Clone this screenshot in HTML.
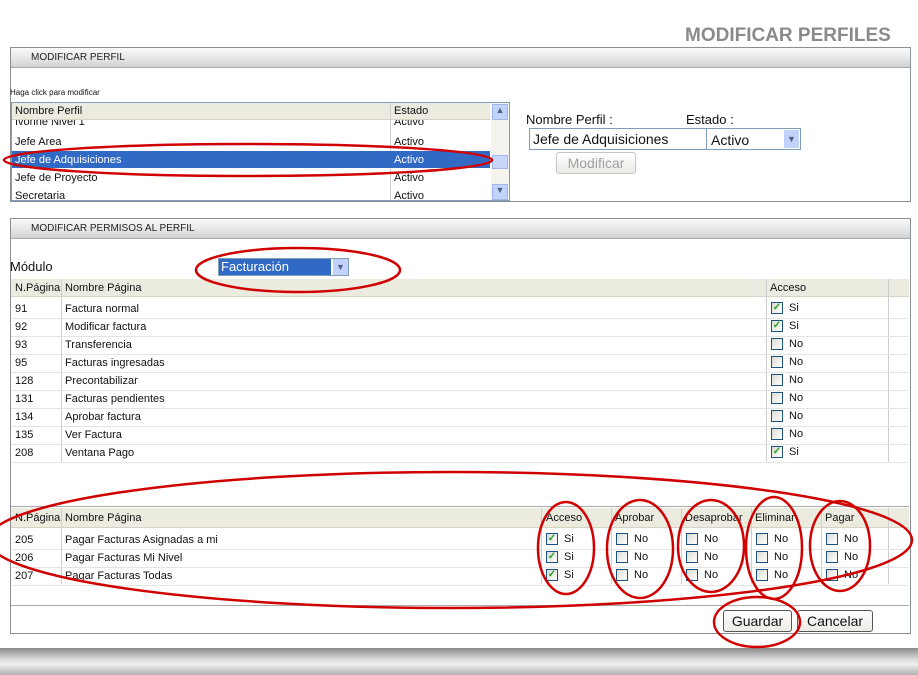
<!DOCTYPE html>
<html><head><meta charset="utf-8"><style>
*{margin:0;padding:0;box-sizing:border-box}
body{width:918px;height:675px;background:#fff;position:relative;overflow:hidden;font-family:"Liberation Sans",sans-serif;font-size:11px;color:#111}
.a{position:absolute;white-space:nowrap}
.bar{position:absolute;background:linear-gradient(#fafafa,#e4e4e4 60%,#d2d2d2);border-bottom:1px solid #aaa}
.box{position:absolute;border:1px solid #8a8f96}
.th{position:absolute;background:#ecebe0;border-bottom:1px solid #d6d3c4}
.cb{position:absolute;width:12px;height:12px;border:1px solid #1c5180;background:linear-gradient(135deg,#dcdcd5,#fff)}
.ck{font-size:10px;color:#21a121;line-height:10px;text-align:center;font-weight:bold}
.vl{position:absolute;width:1px;background:#cfcfcf}
.hl{position:absolute;height:1px;background:#e4e4e4}
.btn{position:absolute;border:1px solid #555;border-radius:3px;background:linear-gradient(#fff,#ecebe6);text-align:center;font-family:"Liberation Sans",sans-serif;font-size:14px}
</style></head><body>
<div class="a" style="left:685px;top:25px;font:bold 19px 'Liberation Sans',sans-serif;color:#8a8a8a">MODIFICAR PERFILES</div>

<div class="box" style="left:10px;top:47px;width:901px;height:155px"></div>
<div class="bar" style="left:11px;top:48px;width:899px;height:20px"></div>
<div class="a" style="left:31px;top:52px;font-size:10px;color:#222">MODIFICAR PERFIL</div>
<div class="a" style="left:10px;top:88px;font-size:8px">Haga click para modificar</div>
<div class="box" style="left:11px;top:102px;width:499px;height:99px;border-color:#7f9db9"></div>
<div class="a" style="left:15px;top:119px;height:9px;overflow:hidden;line-height:6px">Ivonne Nivel 1</div><div class="a" style="left:394px;top:119px;height:9px;overflow:hidden;line-height:6px">Activo</div>
<div class="th" style="left:12px;top:103px;width:478px;height:17px"></div>
<div class="vl" style="left:390px;top:103px;height:97px"></div>
<div class="a" style="left:15px;top:105px">Nombre Perfil</div><div class="a" style="left:394px;top:105px">Estado</div>
<div class="a" style="left:15px;top:136px">Jefe Area</div><div class="a" style="left:394px;top:136px">Activo</div>
<div class="a" style="left:12px;top:151px;width:478px;height:17px;background:#316ac5"></div>
<div class="a" style="left:15px;top:154px;color:#fff">Jefe de Adquisiciones</div><div class="a" style="left:394px;top:154px;color:#fff">Activo</div>
<div class="a" style="left:15px;top:172px">Jefe de Proyecto</div><div class="a" style="left:394px;top:172px">Activo</div>
<div class="a" style="left:15px;top:190px;height:10px;overflow:hidden">Secretaria</div><div class="a" style="left:394px;top:190px;height:10px;overflow:hidden">Activo</div>
<div class="a" style="left:491px;top:103px;width:18px;height:97px;background:#f4f3ee"></div>
<div class="a" style="left:492px;top:104px;width:16px;height:16px;background:#c1d3fb;border:1px solid #a0b8e8;color:#4d6185;font-size:9px;text-align:center">▲</div>
<div class="a" style="left:492px;top:155px;width:16px;height:14px;background:#c8d6fb;border:1px solid #a0b8e8"></div>
<div class="a" style="left:492px;top:184px;width:16px;height:16px;background:#c1d3fb;border:1px solid #a0b8e8;color:#4d6185;font-size:9px;text-align:center">▼</div>

<div class="a" style="left:526px;top:112px;font:13px 'Liberation Sans',sans-serif">Nombre Perfil :</div>
<div class="a" style="left:686px;top:112px;font:13px 'Liberation Sans',sans-serif">Estado :</div>
<div class="a" style="left:529px;top:128px;width:178px;height:22px;border:1px solid #7f9db9;font:14px 'Liberation Sans',sans-serif;padding:2px 3px">Jefe de Adquisiciones</div>
<div class="a" style="left:706px;top:128px;width:95px;height:22px;border:1px solid #7f9db9;font:14px 'Liberation Sans',sans-serif;padding:3px 4px">Activo</div>
<div class="a" style="left:784px;top:130px;width:15px;height:18px;background:#c1d3fb;color:#4d6185;font-size:9px;text-align:center;line-height:18px">▼</div>
<div class="btn" style="left:556px;top:152px;width:80px;height:22px;color:#a0a0a0;border-color:#c4c4c4;line-height:20px">Modificar</div>

<div class="box" style="left:10px;top:218px;width:901px;height:416px"></div>
<div class="bar" style="left:11px;top:219px;width:899px;height:20px"></div>
<div class="a" style="left:31px;top:223px;font-size:10px;color:#222">MODIFICAR PERMISOS AL PERFIL</div>
<div class="a" style="left:10px;top:259px;font-size:13px">Módulo</div>
<div class="a" style="left:218px;top:258px;width:131px;height:18px;border:1px solid #7f9db9"></div>
<div class="a" style="left:219px;top:259px;width:112px;height:16px;background:#316ac5;color:#fff;font:13px 'Liberation Sans',sans-serif;padding-left:2px;line-height:15px">Facturación</div>
<div class="a" style="left:333px;top:259px;width:15px;height:16px;background:#c1d3fb;color:#4d6185;font-size:9px;text-align:center;line-height:16px">▼</div>

<div class="th" style="left:11px;top:279px;width:898px;height:18px"></div>
<div class="a" style="left:15px;top:282px">N.Página</div><div class="a" style="left:65px;top:282px">Nombre Página</div><div class="a" style="left:770px;top:282px">Acceso</div>
<div class="vl" style="left:61px;top:279px;height:183px"></div><div class="vl" style="left:766px;top:279px;height:183px"></div><div class="vl" style="left:888px;top:279px;height:183px"></div>
<div id="t1"></div>

<div class="hl" style="left:11px;top:506px;width:898px;background:#aaa"></div>
<div class="th" style="left:11px;top:508px;width:898px;height:20px"></div>
<div class="a" style="left:15px;top:512px">N.Página</div><div class="a" style="left:65px;top:512px">Nombre Página</div>
<div class="a" style="left:546px;top:512px">Acceso</div><div class="a" style="left:615px;top:512px">Aprobar</div><div class="a" style="left:685px;top:512px">Desaprobar</div><div class="a" style="left:755px;top:512px">Eliminar</div><div class="a" style="left:825px;top:512px">Pagar</div>
<div class="vl" style="left:61px;top:508px;height:76px"></div><div class="vl" style="left:541px;top:508px;height:76px"></div><div class="vl" style="left:611px;top:508px;height:76px"></div><div class="vl" style="left:681px;top:508px;height:76px"></div><div class="vl" style="left:751px;top:508px;height:76px"></div><div class="vl" style="left:821px;top:508px;height:76px"></div><div class="vl" style="left:888px;top:508px;height:76px"></div>
<div id="t2"></div>
<div class="hl" style="left:11px;top:605px;width:898px;background:#aaa"></div>
<div class="btn" style="left:723px;top:610px;width:69px;height:22px;line-height:20px">Guardar</div>
<div class="btn" style="left:797px;top:610px;width:76px;height:22px;line-height:20px">Cancelar</div>

<div class="a" style="left:0;top:648px;width:918px;height:27px;background:linear-gradient(#8a8a8a,#d8d8d8 40%,#f0f0f0 60%,#b0b0b0)"></div>

<script>
var r1=[[91,"Factura normal",1],[92,"Modificar factura",1],[93,"Transferencia",0],[95,"Facturas ingresadas",0],[128,"Precontabilizar",0],[131,"Facturas pendientes",0],[134,"Aprobar factura",0],[135,"Ver Factura",0],[208,"Ventana Pago",1]];
var h="";
function cb(x,y,c){return '<div class="cb ck" style="left:'+x+'px;top:'+y+'px">'+(c?'✓':'')+'</div><div class="a" style="left:'+(x+18)+'px;top:'+(y)+'px">'+(c?'Si':'No')+'</div>';}
r1.forEach(function(r,i){var y=303+i*18;h+='<div class="a" style="left:15px;top:'+y+'px">'+r[0]+'</div><div class="a" style="left:65px;top:'+y+'px">'+r[1]+'</div>'+cb(771,y-1,r[2])+'<div class="hl" style="left:11px;top:'+(y+15)+'px;width:898px"></div>';});
document.getElementById("t1").outerHTML=h;
var r2=[[205,"Pagar Facturas Asignadas a mi"],[206,"Pagar Facturas Mi Nivel"],[207,"Pagar Facturas Todas"]];h="";
r2.forEach(function(r,i){var y=534+i*18;h+='<div class="a" style="left:15px;top:'+y+'px">'+r[0]+'</div><div class="a" style="left:65px;top:'+y+'px">'+r[1]+'</div>';
[546,616,686,756,826].forEach(function(x,j){h+=cb(x,y-1,j==0);});h+='<div class="hl" style="left:11px;top:'+(y+15)+'px;width:898px"></div>';});
document.getElementById("t2").outerHTML=h;
</script>

<svg class="a" style="left:0;top:0" width="918" height="675"><g fill="none" stroke="#d00000" stroke-width="2.5">
<ellipse cx="248" cy="160" rx="244" ry="16"/>
<ellipse cx="298" cy="270" rx="102" ry="22"/>
<ellipse cx="450" cy="540" rx="462" ry="68"/>
<ellipse cx="566" cy="548" rx="28" ry="46"/>
<ellipse cx="640" cy="549" rx="33" ry="49"/>
<ellipse cx="711" cy="546" rx="33" ry="46"/>
<ellipse cx="774" cy="548" rx="28" ry="51"/>
<ellipse cx="840" cy="546" rx="30" ry="45"/>
<ellipse cx="757" cy="622" rx="43" ry="25"/>
</g></svg>
</body></html>
